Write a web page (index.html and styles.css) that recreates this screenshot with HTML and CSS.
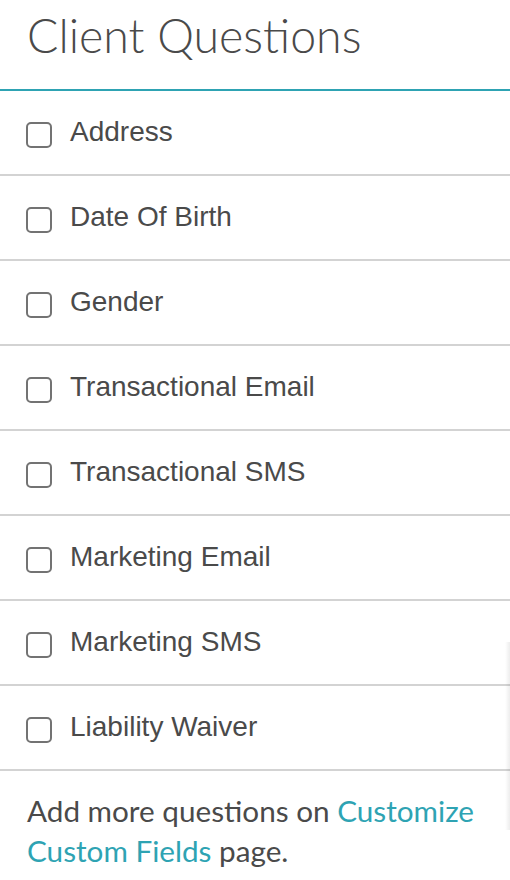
FILE: index.html
```html
<!DOCTYPE html>
<html lang="en">
<head>
    <meta charset="UTF-8">
    <meta name="viewport" content="width=device-width, initial-scale=1.0">
    <title>Client Questions</title>
    <link rel="stylesheet" href="styles.css">
</head>
<body>

    <div class="panel">
        <!-- Header -->
        <div class="panel-header">
            <h2>Client Questions</h2>
        </div>

        <!-- Question list -->
        <ul class="question-list">
            <li class="question"><label><input type="checkbox"><span>Address</span></label></li>
            <li class="question"><label><input type="checkbox"><span>Date Of Birth</span></label></li>
            <li class="question"><label><input type="checkbox"><span>Gender</span></label></li>
            <li class="question"><label><input type="checkbox"><span>Transactional Email</span></label></li>
            <li class="question"><label><input type="checkbox"><span>Transactional SMS</span></label></li>
            <li class="question"><label><input type="checkbox"><span>Marketing Email</span></label></li>
            <li class="question"><label><input type="checkbox"><span>Marketing SMS</span></label></li>
            <li class="question"><label><input type="checkbox"><span>Liability Waiver</span></label></li>
        </ul>

        <p class="panel-footer">
            Add more questions on <a href="#">Customize Custom Fields</a> page.
        </p>
    </div>

    <div class="edge-shadow"></div>

</body>
</html>
```

FILE: styles.css
```css
:root {
    --text: #4a4a4a;
    --teal: #2ea3b3;
    --line: #d3d3d3;
    --box: #737373;
    --white: #ffffff;
}

* {
    margin: 0;
    padding: 0;
    box-sizing: border-box;
}

body {
    background: var(--white);
    color: var(--text);
    font-family: "Liberation Sans", Arial, sans-serif;
    overflow: hidden;
}

.panel {
    width: 100%;
}

.panel-header {
    height: 91px;
    padding: 10px 27px 0;
    border-bottom: 2px solid var(--teal);
}

.panel-header h2 {
    font-family: Lato, sans-serif;
    font-weight: 300;
    font-size: 46.5px;
    line-height: 50px;
    color: var(--text);
}

.question-list {
    list-style: none;
}

.question {
    height: 85px;
    border-bottom: 2px solid var(--line);
}

.question label {
    display: flex;
    align-items: center;
    gap: 18px;
    height: 100%;
    padding: 0 26px;
    font-size: 28px;
    cursor: pointer;
}

.question input {
    appearance: none;
    flex: none;
    width: 26px;
    height: 26px;
    margin-top: 4px;
    border: 2px solid var(--box);
    border-radius: 5px;
    background: var(--white);
    cursor: pointer;
}

.question span {
    margin-top: -2px;
}

.panel-footer {
    padding: 20px 18px 0 27px;
    font-family: Lato, sans-serif;
    font-size: 29.7px;
    line-height: 40px;
    color: var(--text);
}

.panel-footer a {
    color: var(--teal);
    text-decoration: none;
}

.edge-shadow {
    position: absolute;
    top: 642px;
    right: 0;
    width: 5px;
    height: 188px;
    background: linear-gradient(to right, rgba(0, 0, 0, 0), rgba(0, 0, 0, 0.07));
}
```
